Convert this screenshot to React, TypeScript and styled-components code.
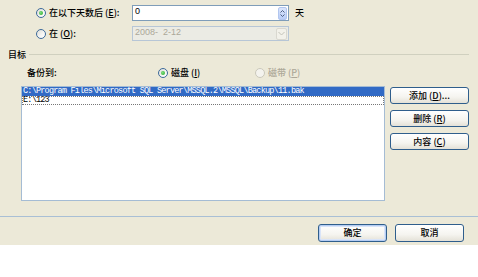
import React from "react";
import styled, { createGlobalStyle, css } from "styled-components";

const Global = createGlobalStyle`
  html, body { margin: 0; padding: 0; background: #ffffff; }
  body { font-family: "Noto Sans CJK SC", "Noto Sans", sans-serif; font-size: 9px; font-weight: 500; color: #000; }
  * { box-sizing: border-box; }
`;

const Panel = styled.div`
  width: 478px;
  height: 245px;
  background: #ece9d8;
  display: flex;
  flex-direction: column;
  padding-left: 1px;
`;

const OptionRow = styled.div<{ $h: number; $mt: number }>`
  display: flex;
  align-items: center;
  height: ${(p) => p.$h}px;
  margin-top: ${(p) => p.$mt}px;
  padding-left: 35px;
`;

const RadioCircle = styled.span<{ $checked?: boolean; $disabled?: boolean }>`
  position: relative;
  width: 10px;
  height: 10px;
  flex: none;
  border-radius: 50%;
  border: 1px solid ${(p) => (p.$disabled ? "#cac8bb" : "#3d6a9a")};
  background: ${(p) =>
    p.$disabled ? "#f4f3ee" : "linear-gradient(135deg, #dcdcd6 0%, #f6f6f4 60%, #ffffff 100%)"};
  ${(p) =>
    p.$checked &&
    css`
      &::after {
        content: "";
        position: absolute;
        left: 2px;
        top: 2px;
        width: 4px;
        height: 4px;
        border-radius: 50%;
        background: radial-gradient(circle at 40% 40%, #7fe07f, #21a121);
      }
    `}
`;

const Label = styled.span<{ $w?: number; $disabled?: boolean; $ml?: number }>`
  display: inline-block;
  margin-left: ${(p) => (p.$ml ?? 3)}px;
  width: ${(p) => (p.$w ? `${p.$w}px` : "auto")};
  white-space: nowrap;
  line-height: 10px;
  color: ${(p) => (p.$disabled ? "#aca899" : "#000")};
  u { text-decoration: underline; }
`;

const Field = styled.div<{ $disabled?: boolean }>`
  display: flex;
  align-items: center;
  width: 157px;
  height: 100%;
  border: 1px solid ${(p) => (p.$disabled ? "#b7c6d6" : "#7f9db9")};
  background: ${(p) => (p.$disabled ? "#ebebe4" : "#ffffff")};
  padding: 0 1px 0 2px;
`;

const FieldText = styled.span<{ $disabled?: boolean }>`
  flex: 1;
  font-family: "Liberation Sans", Arial, sans-serif;
  font-size: 9px;
  font-weight: 400;
  line-height: 10px;
  color: ${(p) => (p.$disabled ? "#aca899" : "#000")};
  align-self: flex-start;
`;

const SpinBox = styled.span`
  width: 9px;
  height: 13px;
  border-radius: 2px;
  background: linear-gradient(#dbe6fd, #b9cdf6);
  border: 1px solid #b2c6ef;
  display: flex;
  align-items: center;
  justify-content: center;
`;

const DropBox = styled.span`
  width: 11px;
  height: 12px;
  border-radius: 2px;
  background: #f2f1ea;
  border: 1px solid #d9d8d0;
  display: flex;
  align-items: center;
  justify-content: center;
`;

const Unit = styled.span`
  margin-left: 6px;
  line-height: 10px;
`;

const GroupHeader = styled.div`
  display: flex;
  align-items: center;
  height: 10px;
  margin-top: 8px;
  padding-left: 7px;
  padding-right: 9px;
`;

const GroupLine = styled.span`
  flex: 1;
  height: 1px;
  margin-left: 3px;
  background: #d0d0bf;
`;

const TargetRow = styled.div`
  display: flex;
  align-items: center;
  height: 10px;
  margin-top: 9px;
  padding-left: 26px;
`;

const RadioItem = styled.span<{ $w?: number }>`
  display: flex;
  align-items: center;
  width: ${(p) => (p.$w ? `${p.$w}px` : "auto")};
`;

const ListArea = styled.div`
  display: flex;
  margin-top: 8px;
  padding-left: 20px;
`;

const ListBox = styled.div`
  width: 364px;
  height: 115px;
  border: 1px solid #a5bcd4;
  background: #ffffff;
  display: flex;
  flex-direction: column;
`;

const ListItem = styled.div<{ $selected?: boolean; $focused?: boolean }>`
  height: 9px;
  font-family: "Liberation Mono", "Courier New", monospace;
  font-size: 8.5px;
  font-weight: 400;
  letter-spacing: -0.78px;
  line-height: 9px;
  padding-left: 1px;
  white-space: nowrap;
  overflow: hidden;
  background: ${(p) => (p.$selected ? "#316ac5" : "transparent")};
  color: ${(p) => (p.$selected ? "#ffffff" : "#000000")};
  outline: ${(p) => (p.$focused ? "1px dotted #777" : "none")};
  outline-offset: -1px;
`;

const SideButtons = styled.div`
  display: flex;
  flex-direction: column;
  gap: 6px;
  margin-left: 5px;
  padding-top: 1px;
`;

const XpButton = styled.button<{ $w: number; $h: number; $default?: boolean }>`
  width: ${(p) => p.$w}px;
  height: ${(p) => p.$h}px;
  padding: 0;
  border: 1px solid #2f5e8c;
  border-radius: 3px;
  background: linear-gradient(#ffffff 0%, #f5f4ef 60%, #e4e1d7 100%);
  font-family: "Noto Sans CJK SC", sans-serif;
  font-size: 9px;
  font-weight: 500;
  line-height: 10px;
  color: #000;
  display: flex;
  align-items: center;
  justify-content: center;
  ${(p) =>
    p.$default &&
    css`
      box-shadow: inset 0 0 0 1px #b5cdf3, inset 0 0 0 2px #d9e4f8;
    `}
  u { text-decoration: underline; }
`;

const Separator = styled.div`
  height: 1px;
  margin-top: 15px;
  margin-left: -1px;
  background: #a9bfd5;
`;

const Footer = styled.div`
  display: flex;
  justify-content: flex-end;
  gap: 8px;
  margin-top: 7px;
  padding-right: 14px;
`;

const SpinIcon = () => (
  <svg width="5" height="9" viewBox="0 0 5 9">
    <path d="M0.5 3.5 L2.5 1.5 L4.5 3.5" fill="none" stroke="#4d6185" strokeWidth="1" />
    <path d="M0.5 5.5 L2.5 7.5 L4.5 5.5" fill="none" stroke="#4d6185" strokeWidth="1" />
  </svg>
);

const ChevronIcon = () => (
  <svg width="7" height="5" viewBox="0 0 7 5">
    <path d="M0.5 1 L3.5 4 L6.5 1" fill="none" stroke="#c2c2b8" strokeWidth="1" />
  </svg>
);

export default function App() {
  return (
    <>
      <Global />
      <Panel>
        <OptionRow $h={16} $mt={5}>
          <RadioCircle $checked />
          <Label $w={83}>在以下天数后 (<u>E</u>):</Label>
          <Field>
            <FieldText>0</FieldText>
            <SpinBox>
              <SpinIcon />
            </SpinBox>
          </Field>
          <Unit>天</Unit>
        </OptionRow>
        <OptionRow $h={15} $mt={5}>
          <RadioCircle />
          <Label $w={83}>在 (<u>O</u>):</Label>
          <Field $disabled>
            <FieldText $disabled>2008-&nbsp;&nbsp;2-12</FieldText>
            <DropBox>
              <ChevronIcon />
            </DropBox>
          </Field>
        </OptionRow>
        <GroupHeader>
          <span>目标</span>
          <GroupLine />
        </GroupHeader>
        <TargetRow>
          <Label $w={131} $ml={0}>备份到:</Label>
          <RadioItem $w={97}>
            <RadioCircle $checked />
            <Label>磁盘 (<u>I</u>)</Label>
          </RadioItem>
          <RadioItem>
            <RadioCircle $disabled />
            <Label $disabled>磁带 (<u>P</u>)</Label>
          </RadioItem>
        </TargetRow>
        <ListArea>
          <ListBox>
            <ListItem $selected>C:\Program Files\Microsoft SQL Server\MSSQL.2\MSSQL\Backup\11.bak</ListItem>
            <ListItem $focused>E:\123</ListItem>
          </ListBox>
          <SideButtons>
            <XpButton $w={79} $h={17}>添加 (<u>D</u>)...</XpButton>
            <XpButton $w={79} $h={17}>删除 (<u>R</u>)</XpButton>
            <XpButton $w={79} $h={17}>内容 (<u>C</u>)</XpButton>
          </SideButtons>
        </ListArea>
        <Separator />
        <Footer>
          <XpButton $w={69} $h={18} $default>确定</XpButton>
          <XpButton $w={69} $h={18}>取消</XpButton>
        </Footer>
      </Panel>
    </>
  );
}
